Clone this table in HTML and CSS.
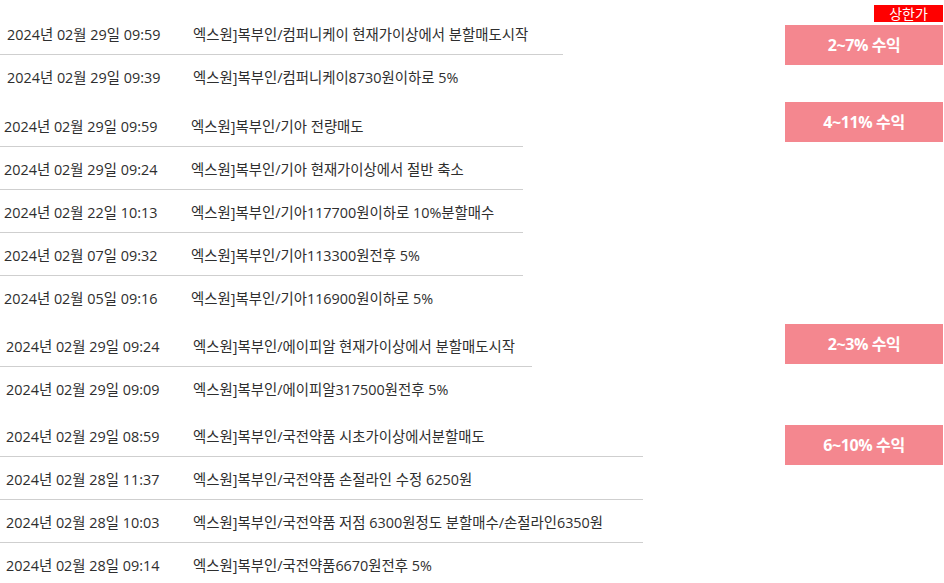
FILE: index.html
```html
<!DOCTYPE html>
<html lang="ko">
<head>
<meta charset="utf-8">
<title>수익 내역</title>
<link rel="stylesheet" href="styles.css">
</head>
<body>
<div class="page">
  <span class="badge">상한가</span>

  <section class="group group--1">
    <ul class="list list--1">
      <li class="row"><span class="date">2024년 02월 29일 09:59</span><span class="msg">엑스원]복부인/컴퍼니케이 현재가이상에서 분할매도시작</span></li>
      <li class="row"><span class="date">2024년 02월 29일 09:39</span><span class="msg">엑스원]복부인/컴퍼니케이8730원이하로 5%</span></li>
    </ul>
    <div class="tag tag--1">2~7% 수익</div>
  </section>

  <section class="group group--2">
    <ul class="list list--2">
      <li class="row"><span class="date">2024년 02월 29일 09:59</span><span class="msg">엑스원]복부인/기아 전량매도</span></li>
      <li class="row"><span class="date">2024년 02월 29일 09:24</span><span class="msg">엑스원]복부인/기아 현재가이상에서 절반 축소</span></li>
      <li class="row"><span class="date">2024년 02월 22일 10:13</span><span class="msg">엑스원]복부인/기아117700원이하로 10%분할매수</span></li>
      <li class="row"><span class="date">2024년 02월 07일 09:32</span><span class="msg">엑스원]복부인/기아113300원전후 5%</span></li>
      <li class="row"><span class="date">2024년 02월 05일 09:16</span><span class="msg">엑스원]복부인/기아116900원이하로 5%</span></li>
    </ul>
    <div class="tag tag--2">4~11% 수익</div>
  </section>

  <section class="group group--3">
    <ul class="list list--3">
      <li class="row"><span class="date">2024년 02월 29일 09:24</span><span class="msg">엑스원]복부인/에이피알 현재가이상에서 분할매도시작</span></li>
      <li class="row"><span class="date">2024년 02월 29일 09:09</span><span class="msg">엑스원]복부인/에이피알317500원전후 5%</span></li>
    </ul>
    <div class="tag tag--3">2~3% 수익</div>
  </section>

  <section class="group group--4">
    <ul class="list list--4">
      <li class="row"><span class="date">2024년 02월 29일 08:59</span><span class="msg">엑스원]복부인/국전약품 시초가이상에서분할매도</span></li>
      <li class="row"><span class="date">2024년 02월 28일 11:37</span><span class="msg">엑스원]복부인/국전약품 손절라인 수정 6250원</span></li>
      <li class="row"><span class="date">2024년 02월 28일 10:03</span><span class="msg">엑스원]복부인/국전약품 저점 6300원정도 분할매수/손절라인6350원</span></li>
      <li class="row"><span class="date">2024년 02월 28일 09:14</span><span class="msg">엑스원]복부인/국전약품6670원전후 5%</span></li>
    </ul>
    <div class="tag tag--4">6~10% 수익</div>
  </section>
</div>
</body>
</html>
```
FILE: styles.css
```css
* { box-sizing: border-box; }

html, body {
  margin: 0;
  padding: 0;
  background: #fff;
}

body {
  font-family: "Open Sans", "Noto Sans CJK KR", sans-serif;
  font-size: 14.4px;
  color: #2e2e2e;
  overflow: hidden;
}

.page {
  position: relative;
  width: 944px;
  padding-right: 1px;
}

.badge {
  position: absolute;
  top: 5px;
  right: 1px;
  width: 69px;
  height: 17px;
  background: #ff0000;
  color: #fff;
  font-size: 14px;
  line-height: 17px;
  text-align: center;
}

.group {
  display: flex;
  justify-content: space-between;
  align-items: flex-start;
}

.group--1 { padding-top: 12px; }
.group--2 { padding-top: 7px; }
.group--3 { padding-top: 6px; }
.group--4 { padding-top: 5px; }

.list {
  list-style: none;
  margin: 0;
  padding: 0;
}

.list--1 { width: 563px; }
.list--2 { width: 523px; }
.list--3 { width: 532px; }
.list--4 { width: 643px; }

.row {
  display: grid;
  grid-template-columns: 186px auto;
  align-items: center;
  height: 43px;
  border-bottom: 1px solid #cfcfcf;
  padding-left: 7px;
  white-space: nowrap;
}

.list--2 .row { padding-left: 4px; grid-template-columns: 187px auto; }
.list--3 .row,
.list--4 .row { padding-left: 6px; grid-template-columns: 187px auto; }

.row:last-child {
  border-bottom: none;
  height: 42px;
}

.tag {
  width: 158px;
  height: 40px;
  background: #f4878f;
  color: #fff;
  font-weight: bold;
  font-size: 16px;
  line-height: 40px;
  text-align: center;
  letter-spacing: -0.4px;
}

.tag--1 { margin-top: 13px; }
.tag--2 { margin-top: -2px; }
.tag--3 { margin-top: 0; }
.tag--4 { margin-top: 11px; }
```
